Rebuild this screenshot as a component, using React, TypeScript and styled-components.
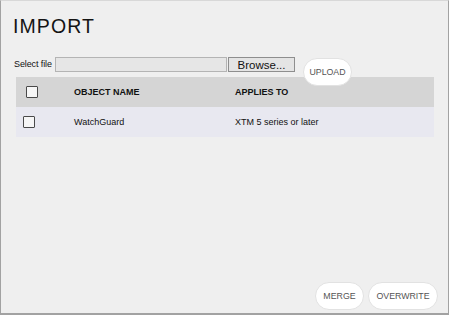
import React from "react";
import styled, { createGlobalStyle } from "styled-components";

const Global = createGlobalStyle`
  html, body { margin: 0; padding: 0; background: #efefef; }
  body { font-family: "Liberation Sans", Arial, sans-serif; }
  * { box-sizing: border-box; }
`;

const Frame = styled.div`
  width: 449px;
  height: 315px;
  background: #efefef;
  border-top: 1px solid #d8d8d8;
  border-left: 1px solid #a2a2a2;
  border-right: 1px solid #a2a2a2;
  border-bottom: 2px solid #a2a2a2;
  padding: 15px 10px 2px 13px;
  display: flex;
  flex-direction: column;
`;

const Title = styled.h1`
  margin: 0 0 0 -1px;
  font-size: 19.5px;
  line-height: 20px;
  font-weight: normal;
  letter-spacing: 1.1px;
  color: #141414;
`;

const FileRow = styled.div`
  display: flex;
  align-items: flex-start;
  margin-top: 21px;
  height: 15px;
`;

const Label = styled.span`
  font-size: 9px;
  line-height: 15px;
  color: #111;
  width: 41px;
  letter-spacing: -0.1px;
`;

const FileInput = styled.div`
  width: 172px;
  height: 15px;
  background: #e6e6e6;
  border: 1px solid #b4b4b4;
`;

const Browse = styled.button`
  width: 67px;
  height: 15px;
  padding: 0;
  margin-left: 1px;
  background: #e4e4e4;
  border: 1px solid #8e8e8e;
  font-family: "Liberation Sans", Arial, sans-serif;
  font-size: 11.5px;
  line-height: 12px;
  color: #111;
`;

const Pill = styled.button`
  height: 28px;
  padding: 0 6px;
  border-radius: 14px;
  background: #ffffff;
  border: 1px solid #e2e2e2;
  font-family: "Liberation Sans", Arial, sans-serif;
  font-size: 8.8px;
  color: #555;
  display: flex;
  align-items: center;
  justify-content: center;
`;

const UploadPill = styled(Pill)`
  width: 49px;
  margin-left: 8px;
  margin-top: 1px;
  position: relative;
  z-index: 1;
`;

const Table = styled.div`
  margin: 5px 0 0 2px;
  width: 418px;
  display: flex;
  flex-direction: column;
`;

const Row = styled.div<{ $head?: boolean }>`
  display: grid;
  grid-template-columns: 58px 161px 1fr;
  align-items: center;
  height: 30px;
  background: ${(p) => (p.$head ? "#d5d5d5" : "#e8e8f0")};
  font-size: 9px;
  font-weight: ${(p) => (p.$head ? "bold" : "normal")};
  color: #111;
`;

const CheckCell = styled.div<{ $head?: boolean }>`
  padding-left: ${(p) => (p.$head ? "10px" : "7px")};
  display: flex;
  align-items: center;
`;

const Check = styled.span`
  width: 12px;
  height: 12px;
  border: 1.5px solid #4a4a4a;
  border-radius: 1px;
  background: #f6f6f6;
  display: block;
`;

const Footer = styled.div`
  margin-top: auto;
  display: flex;
  justify-content: flex-end;
  gap: 4px;
  margin-bottom: 1px;
`;

const FootPill = styled(Pill)<{ $w: number }>`
  width: ${(p) => p.$w}px;
`;

export default function App() {
  return (
    <>
      <Global />
      <Frame>
        <Title>IMPORT</Title>
        <FileRow>
          <Label>Select file</Label>
          <FileInput />
          <Browse>Browse...</Browse>
          <UploadPill>UPLOAD</UploadPill>
        </FileRow>
        <Table>
          <Row $head>
            <CheckCell $head>
              <Check />
            </CheckCell>
            <div>OBJECT NAME</div>
            <div>APPLIES TO</div>
          </Row>
          <Row>
            <CheckCell>
              <Check />
            </CheckCell>
            <div>WatchGuard</div>
            <div>XTM 5 series or later</div>
          </Row>
        </Table>
        <Footer>
          <FootPill $w={49}>MERGE</FootPill>
          <FootPill $w={70}>OVERWRITE</FootPill>
        </Footer>
      </Frame>
    </>
  );
}
